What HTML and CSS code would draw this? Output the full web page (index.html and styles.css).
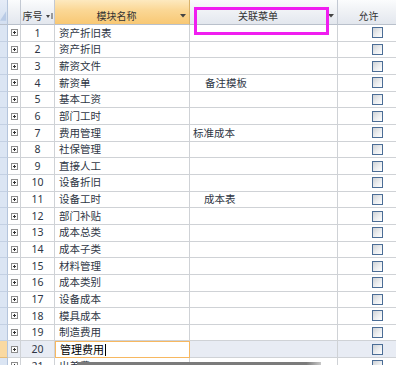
FILE: index.html
```html
<!DOCTYPE html>
<html>
<head>
<meta charset="utf-8">
<link rel="stylesheet" href="styles.css">
</head>
<body>
<div class="sheet">
  <div class="row head">
    <div class="c sel corner"><svg width="8" height="24" viewBox="0 0 8 24"><polygon points="7,11 7,22 0,22" fill="#b9cbe6"/></svg></div>
    <div class="c exp"></div>
    <div class="c num hnum"><span>序号</span><svg class="sort" width="7" height="8" viewBox="0 0 7 8"><polygon points="0,3 4,3 2,6" fill="#444"/><rect x="5.5" y="1" width="1" height="6" fill="#444"/></svg></div>
    <div class="c name hot"><span class="ht">模块名称</span><span class="dd"><svg width="6" height="4" viewBox="0 0 6 4"><polygon points="0,0 6,0 3,3.5" fill="#444"/></svg></span></div>
    <div class="c menu"><span class="ht">关联菜单</span><span class="dd"><svg width="6" height="4" viewBox="0 0 6 4"><polygon points="0,0 6,0 3,3.5" fill="#444"/></svg></span></div>
    <div class="c ok hok">允许</div>
  </div>

  <div class="row"><div class="c sel"></div><div class="c exp"><i class="plus"></i></div><div class="c num">1</div><div class="c name">资产折旧表</div><div class="c menu"></div><div class="c ok"><i class="cb"></i></div></div>
  <div class="row"><div class="c sel"></div><div class="c exp"><i class="plus"></i></div><div class="c num">2</div><div class="c name">资产折旧</div><div class="c menu"></div><div class="c ok"><i class="cb"></i></div></div>
  <div class="row"><div class="c sel"></div><div class="c exp"><i class="plus"></i></div><div class="c num">3</div><div class="c name">薪资文件</div><div class="c menu"></div><div class="c ok"><i class="cb"></i></div></div>
  <div class="row"><div class="c sel"></div><div class="c exp"><i class="plus"></i></div><div class="c num">4</div><div class="c name">薪资单</div><div class="c menu"><span class="ind2">备注模板</span></div><div class="c ok"><i class="cb"></i></div></div>
  <div class="row"><div class="c sel"></div><div class="c exp"><i class="plus"></i></div><div class="c num">5</div><div class="c name">基本工资</div><div class="c menu"></div><div class="c ok"><i class="cb"></i></div></div>
  <div class="row"><div class="c sel"></div><div class="c exp"><i class="plus"></i></div><div class="c num">6</div><div class="c name">部门工时</div><div class="c menu"></div><div class="c ok"><i class="cb"></i></div></div>
  <div class="row"><div class="c sel"></div><div class="c exp"><i class="plus"></i></div><div class="c num">7</div><div class="c name">费用管理</div><div class="c menu"><span class="ind0">标准成本</span></div><div class="c ok"><i class="cb"></i></div></div>
  <div class="row"><div class="c sel"></div><div class="c exp"><i class="plus"></i></div><div class="c num">8</div><div class="c name">社保管理</div><div class="c menu"></div><div class="c ok"><i class="cb"></i></div></div>
  <div class="row"><div class="c sel"></div><div class="c exp"><i class="plus"></i></div><div class="c num">9</div><div class="c name">直接人工</div><div class="c menu"></div><div class="c ok"><i class="cb"></i></div></div>
  <div class="row"><div class="c sel"></div><div class="c exp"><i class="plus"></i></div><div class="c num">10</div><div class="c name">设备折旧</div><div class="c menu"></div><div class="c ok"><i class="cb"></i></div></div>
  <div class="row"><div class="c sel"></div><div class="c exp"><i class="plus"></i></div><div class="c num">11</div><div class="c name">设备工时</div><div class="c menu"><span class="ind1">成本表</span></div><div class="c ok"><i class="cb"></i></div></div>
  <div class="row"><div class="c sel"></div><div class="c exp"><i class="plus"></i></div><div class="c num">12</div><div class="c name">部门补贴</div><div class="c menu"></div><div class="c ok"><i class="cb"></i></div></div>
  <div class="row"><div class="c sel"></div><div class="c exp"><i class="plus"></i></div><div class="c num">13</div><div class="c name">成本总类</div><div class="c menu"></div><div class="c ok"><i class="cb"></i></div></div>
  <div class="row"><div class="c sel"></div><div class="c exp"><i class="plus"></i></div><div class="c num">14</div><div class="c name">成本子类</div><div class="c menu"></div><div class="c ok"><i class="cb"></i></div></div>
  <div class="row"><div class="c sel"></div><div class="c exp"><i class="plus"></i></div><div class="c num">15</div><div class="c name">材料管理</div><div class="c menu"></div><div class="c ok"><i class="cb"></i></div></div>
  <div class="row"><div class="c sel"></div><div class="c exp"><i class="plus"></i></div><div class="c num">16</div><div class="c name">成本类别</div><div class="c menu"></div><div class="c ok"><i class="cb"></i></div></div>
  <div class="row"><div class="c sel"></div><div class="c exp"><i class="plus"></i></div><div class="c num">17</div><div class="c name">设备成本</div><div class="c menu"></div><div class="c ok"><i class="cb"></i></div></div>
  <div class="row"><div class="c sel"></div><div class="c exp"><i class="plus"></i></div><div class="c num">18</div><div class="c name">模具成本</div><div class="c menu"></div><div class="c ok"><i class="cb"></i></div></div>
  <div class="row"><div class="c sel"></div><div class="c exp"><i class="plus"></i></div><div class="c num">19</div><div class="c name">制造费用</div><div class="c menu"></div><div class="c ok"><i class="cb"></i></div></div>
  <div class="row cur"><div class="c sel"></div><div class="c exp"><i class="plus"></i></div><div class="c num">20</div><div class="c name edit">管理费用<span class="caret"></span></div><div class="c menu"></div><div class="c ok"><i class="cb"></i></div></div>
  <div class="row"><div class="c sel"></div><div class="c exp"><i class="plus"></i></div><div class="c num">21</div><div class="c name">出差费用</div><div class="c menu"></div><div class="c ok"><i class="cb"></i></div></div>

  <div class="mark"></div>
  <div class="shadow"></div>
</div>
</body>
</html>
```

FILE: styles.css
```css
html, body {
  margin: 0;
  padding: 0;
  background: #fff;
  overflow: hidden;
}
.sheet {
  position: relative;
  width: 400px;
  height: 365px;
  overflow: hidden;
  font-family: "Noto Sans", "Noto Sans CJK SC", sans-serif;
  font-size: 10.5px;
  color: #2e3644;
}
.row {
  display: grid;
  grid-template-columns: 8px 13px 34px 135px 148px 62px;
  height: 16.667px;
}
.c {
  box-sizing: border-box;
  border-right: 1px solid #cfd2d6;
  border-bottom: 1px solid #cfd2d6;
  display: flex;
  align-items: center;
  overflow: hidden;
  white-space: nowrap;
  line-height: 1;
}
.sel {
  background: #dbe5f3;
  border-right: 1px solid #b5c5dc;
  border-bottom: 1px solid #c3d0e3;
}
.exp {
  justify-content: center;
}
.num {
  justify-content: center;
  font-size: 10.5px;
}
.name {
  padding-left: 4px;
}
.menu {
  padding-left: 3px;
}
.ok {
  padding-left: 34px;
}
.ind0 { margin-left: 0; }
.ind1 { margin-left: 11px; }
.ind2 { margin-left: 12px; }

.plus {
  display: block;
  width: 7px;
  height: 7px;
  box-sizing: border-box;
  border: 1px solid #8d8d8d;
  background:
    linear-gradient(#333, #333) center / 3px 1px no-repeat,
    linear-gradient(#333, #333) center / 1px 3px no-repeat,
    #fdfdfd;
}
.cb {
  display: block;
  width: 11px;
  height: 11px;
  box-sizing: border-box;
  border: 1px solid #4b6d96;
  background: linear-gradient(135deg, #cfd2d6 0%, #eceef0 55%, #ffffff 100%);
}

/* header */
.head {
  height: 25px;
}
.head .c {
  background: linear-gradient(#fbfcfd 0%, #f2f4f7 35%, #e3e7ee 100%);
  border-right: 1px solid #c3c9d3;
  border-bottom: 1px solid #b9c0cb;
  color: #333;
  font-size: 10px;
  padding: 7px 0 0 0;
}
.head .corner {
  background: linear-gradient(#e5ecf7, #d3dff0);
  padding: 0;
  border-right: 1px solid #b5c5dc;
}
.head .hnum {
  justify-content: center;
  gap: 3px;
}
.head .hot {
  background: linear-gradient(#fde9bf 0%, #fbd897 40%, #f8c874 100%);
  border-right: 1px solid #d9b26a;
}
.head .hok {
  justify-content: center;
}
.ht {
  flex: 1;
  text-align: center;
  padding-left: 2px;
}
.dd {
  width: 13px;
  display: flex;
  justify-content: center;
  align-items: center;
}

/* current row */
.cur .c {
  background: #e8ecf4;
}
.cur .sel {
  background: #fad9a1;
  border-bottom-color: #e6bb76;
}
.cur .name.edit {
  background: #fff;
  border: 1.5px solid #f7b861;
  color: #000;
  font-size: 11px;
}
.caret {
  display: inline-block;
  width: 1px;
  height: 12px;
  background: #000;
  margin-left: 1px;
}

/* overlays */
.mark {
  position: absolute;
  left: 194px;
  top: 7px;
  width: 135px;
  height: 28px;
  box-sizing: border-box;
  border: 3px solid #f01ef0;
}
.shadow {
  position: absolute;
  left: 77px;
  top: 362px;
  width: 244px;
  height: 3px;
  background: linear-gradient(to right, #7b7b7b 0%, #7b7b7b 94%, #c8c8c8 100%);
}
```
